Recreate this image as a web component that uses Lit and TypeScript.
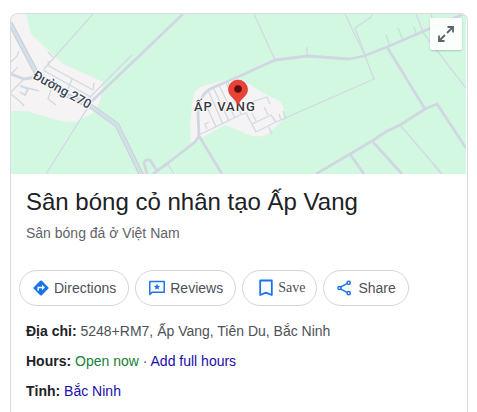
import { LitElement, html, css, svg } from "lit";
import { customElement } from "lit/decorators.js";

const minorRoads = [
  "M44 69 93 14",
  "M88 99 132 55",
  "M46 174 90 104",
  "M48 52 53 57M48 61 49 66 93 90 94 83M43 70 91 97M72 79 68 89",
  "M11 74 18 67M11 62 17 56 19 51M24 79 10 93M20 86 39 91M11 94 24 105 22 106M51 90 48 99 56 105",
  "M168 164 174 174",
  "M254 14 275 60M307 47V56",
  "M345 14 365 56 374 79 283 119",
  "M372 14 371 17 355 28 365 55",
  "M386 35 390 46M398 28 403 40M414 27 416 33M431 14 434 25",
  "M416 14 424 34 466 88",
  "M400 125 436 167",
  "M199 135 240 115 246 113 256 132 276 122 271 115 252 124",
  "M207 129 205 124 209 122M216 127 206 105M223 124 208 90M229 121 213 87M235 118 219 85M241 114 226 83M234 98 228 82",
  "M245 104 267 97 270 104M264 107 268 115M252 113 256 121M276 122 286 118 283 111M281 120 279 114M269 127 272 134",
];

const majorRoads = [
  "M92 101 183 14",
  "M11 74 24 79 37 77",
  "M222 174 199 136 198 114Q199 94 212 88L240 76 275 60 308 56 349 59 364 56 387 47 424 31 466 13",
  "M199 136 195 142 168 163 153 174",
  "M147 174 144 163Q145 159 150 160L157 171",
  "M387 47 425 109",
  "M316 174 350 154 372 141 387 131 400 125 425 109 437 104 466 148",
  "M350 154 364 174M373 142 402 174",
];

const mapArt = svg`
  <rect x="11" y="14" width="455" height="160" fill="#d3f8e2"/>
  <path fill="#f5f3f3" d="M11 14H26L31 34 63 64 103 82 101 97Q97 112 90 115L75 122Q66 122 56 120L27 111H11Z"/>
  <path fill="#f5f3f3" d="M191 142 190 125 193 98Q194 89 203 86L237 77 265 94 279 101Q284 104 284 112L282 121 269 133Q262 138 252 136L225 125 205 136Z"/>
  <g fill="none" stroke-linejoin="round">
    <g stroke="#d0d9e2" stroke-width="1.300">${minorRoads.map((d) => svg`<path d=${d}/>`)}</g>
    <path stroke="#d2dbe4" stroke-width="2" d="M21 86 28 89 25 95 20 92M434 165 442 174"/>
    <g stroke="#d0d7e1" stroke-width="2.800">${majorRoads.map((d) => svg`<path d=${d}/>`)}</g>
    <path stroke="#c1cdd8" stroke-width="5" d="M10 23 37 74 60 92 92 107 117 125 142 176"/>
    <path stroke="#d4dee6" stroke-width="3.400" d="M10 23 37 74 60 92 92 107 117 125 142 176"/>
  </g>
  <text class="road" transform="translate(32 78) rotate(29)">Đường 270</text>
  <text class="place" x="194" y="111">ẤP VANG</text>
  <path fill="#ea4335" stroke="#c5221f" stroke-width=".6" d="M238 80a9.500 9.500 0 0 0-9.500 9.500c0 7.500 8 8.500 9 15.500h1c1-7 9-8 9-15.500A9.500 9.500 0 0 0 238 80Z"/>
  <circle cx="238" cy="89" r="3.800" fill="#5c0f0c"/>
`;

@customElement("app-root")
export class AppRoot extends LitElement {
  static styles = css`
    :host {
      display: flex;
      box-sizing: border-box;
      min-height: 100vh;
      padding: 13px 9px 0 10px;
      background: #fff;
      color: #4d5156;
      font: 14px/30px "Liberation Sans", Arial, sans-serif;
    }
    .card {
      flex: 1;
      min-width: 0;
      border: 1px solid #dadce0;
      border-bottom: 0;
      border-radius: 8px 8px 0 0;
      overflow: hidden;
    }
    .map {
      position: relative;
      height: 160px;
      margin-right: 1px;
    }
    .map-art {
      display: block;
      width: 100%;
      height: 100%;
    }
    .road,
    .place {
      font-family: Roboto, sans-serif;
      font-weight: 500;
      font-size: 13px;
      paint-order: stroke;
      stroke: #fff;
      stroke-width: 2px;
      stroke-linejoin: round;
      fill: #3c4858;
    }
    .place {
      letter-spacing: 1px;
      fill: #36373b;
    }
    .expand {
      position: absolute;
      top: 4px;
      right: 4px;
      display: grid;
      place-items: center;
      width: 32px;
      height: 32px;
      padding: 0;
      border: 0;
      border-radius: 2px;
      background: rgba(255, 255, 255, 0.9);
      box-shadow: 0 1px 2px rgba(0, 0, 0, 0.2);
    }
    .heading {
      padding: 12px 15px 0;
    }
    h1 {
      margin: 0;
      font-size: 24px;
      line-height: 32px;
      font-weight: 400;
      color: #202124;
    }
    .kind {
      margin: 0;
      line-height: 30px;
      color: #5f6368;
    }
    .actions {
      display: flex;
      flex-wrap: wrap;
      gap: 6px;
      padding: 22px 8px 0;
    }
    .pill {
      display: flex;
      align-items: center;
      gap: 5px;
      height: 36px;
      padding: 0 12px 0 13px;
      border: 1px solid #d2d5d9;
      border-radius: 18px;
      background: #fff;
      color: #4d5156;
      font: inherit;
      line-height: 20px;
    }
    .save {
      gap: 2px;
      padding: 0 11px 0 13px;
      font-family: "Liberation Serif", "Times New Roman", serif;
    }
    .facts {
      padding: 10px 15px 0;
    }
    .facts p {
      margin: 0;
    }
    b {
      color: #202124;
    }
    a {
      color: #1a0dab;
      text-decoration: none;
    }
    .open {
      color: #188038;
    }
  `;

  render() {
    return html`
      <main class="card">
        <div class="map">
          <svg class="map-art" viewBox="11 14 455 160" preserveAspectRatio="xMidYMid slice">${mapArt}</svg>
          <button class="expand" aria-label="Expand map">
            <svg width="18" height="18" viewBox="0 0 18 18" fill="none" stroke="#5f6368" stroke-width="1.800">
              <path d="M10.500 2H16V7.500M16 2 10 8M2 10.500V16H7.500M2 16 8 10" />
            </svg>
          </button>
        </div>
        <div class="heading">
          <h1>Sân bóng cỏ nhân tạo Ấp Vang</h1>
          <p class="kind">Sân bóng đá ở Việt Nam</p>
        </div>
        <div class="actions">
          <button class="pill">
            <svg width="16" height="16" viewBox="0 0 16 16">
              <path fill="#1a73e8" d="M7.200.800a1.100 1.100 0 0 1 1.600 0l6.400 6.400a1.100 1.100 0 0 1 0 1.600l-6.400 6.400a1.100 1.100 0 0 1-1.600 0L.800 8.800a1.100 1.100 0 0 1 0-1.600Z" />
              <path fill="none" stroke="#fff" stroke-width="1.500" d="M5.200 10.800V7.500H9.500" />
              <path fill="#fff" d="M9 4.700 11.900 7.500 9 10.300Z" />
            </svg>
            Directions
          </button>
          <button class="pill">
            <svg width="16" height="16" viewBox="0 0 16 16">
              <path fill="none" stroke="#1a73e8" stroke-width="1.500" stroke-linejoin="round" d="M.800 14.500V1.500H15.200V12.200H3.200Z" />
              <path fill="#1a73e8" d="m8 3.700.9 2.100 2.300.2-1.700 1.500.5 2.300L8 8.600 6 9.800l.5-2.300L4.800 6l2.300-.2Z" />
            </svg>
            Reviews
          </button>
          <button class="pill save">
            <svg width="20" height="20" viewBox="0 0 20 20">
              <path fill="none" stroke="#1a73e8" stroke-width="1.800" stroke-linejoin="round" d="M4.200 2.500H15.800V17L10 14.600 4.200 17Z" />
            </svg>
            Save
          </button>
          <button class="pill">
            <svg width="16" height="16" viewBox="0 0 16 16" fill="none" stroke="#1a73e8" stroke-width="1.500">
              <path d="M3.400 7.200 10 3.700M3.400 8.800 10 12.300" />
              <circle cx="2.500" cy="8" r="1.600" />
              <circle cx="11.700" cy="2.800" r="1.600" />
              <circle cx="11.700" cy="13.200" r="1.600" />
            </svg>
            Share
          </button>
        </div>
        <div class="facts">
          <p><b>Địa chỉ:</b> 5248+RM7, Ấp Vang, Tiên Du, Bắc Ninh</p>
          <p><b>Hours:</b> <span class="open">Open now</span> · <a href="#hours">Add full hours</a></p>
          <p><b>Tỉnh:</b> <a href="#province">Bắc Ninh</a></p>
        </div>
      </main>
    `;
  }
}
